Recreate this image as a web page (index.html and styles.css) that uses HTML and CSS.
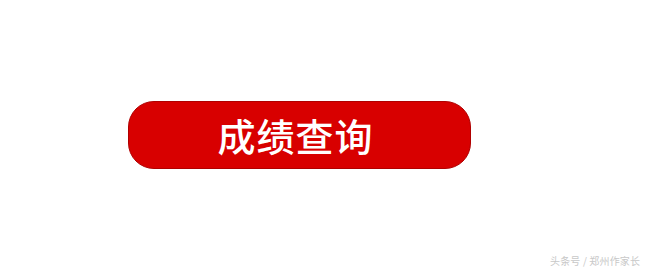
FILE: index.html
```html
<!DOCTYPE html>
<html lang="zh">
<head>
<meta charset="utf-8">
<link rel="stylesheet" href="styles.css">
</head>
<body>
<div class="page">
  <div class="btn-row">
    <div class="btn">成绩查询</div>
  </div>
  <div class="watermark">头条号 / 郑州作家长</div>
</div>
</body>
</html>
```
FILE: styles.css
```css
html, body {
  margin: 0;
  padding: 0;
  background: #fff;
}
.page {
  width: 646px;
  height: 272px;
  display: flex;
  flex-direction: column;
  font-family: "Noto Sans CJK SC", "Noto Sans", sans-serif;
}
.btn-row {
  padding: 101px 0 0 128px;
}
.btn {
  width: 343px;
  height: 68px;
  box-sizing: border-box;
  border-radius: 26px;
  background: #d80000;
  border: 1px solid #b00000;
  color: #fff;
  font-size: 38px;
  font-weight: 500;
  line-height: 66px;
  text-align: center;
  letter-spacing: 1px;
  text-indent: -8px;
}
.watermark {
  margin-top: auto;
  align-self: flex-end;
  width: 90px;
  padding: 0 6px 4px 0;
  font-size: 10px;
  line-height: 14px;
  text-align: justify;
  text-align-last: justify;
  text-justify: inter-character;
  color: #c8c8c8;
}
```
